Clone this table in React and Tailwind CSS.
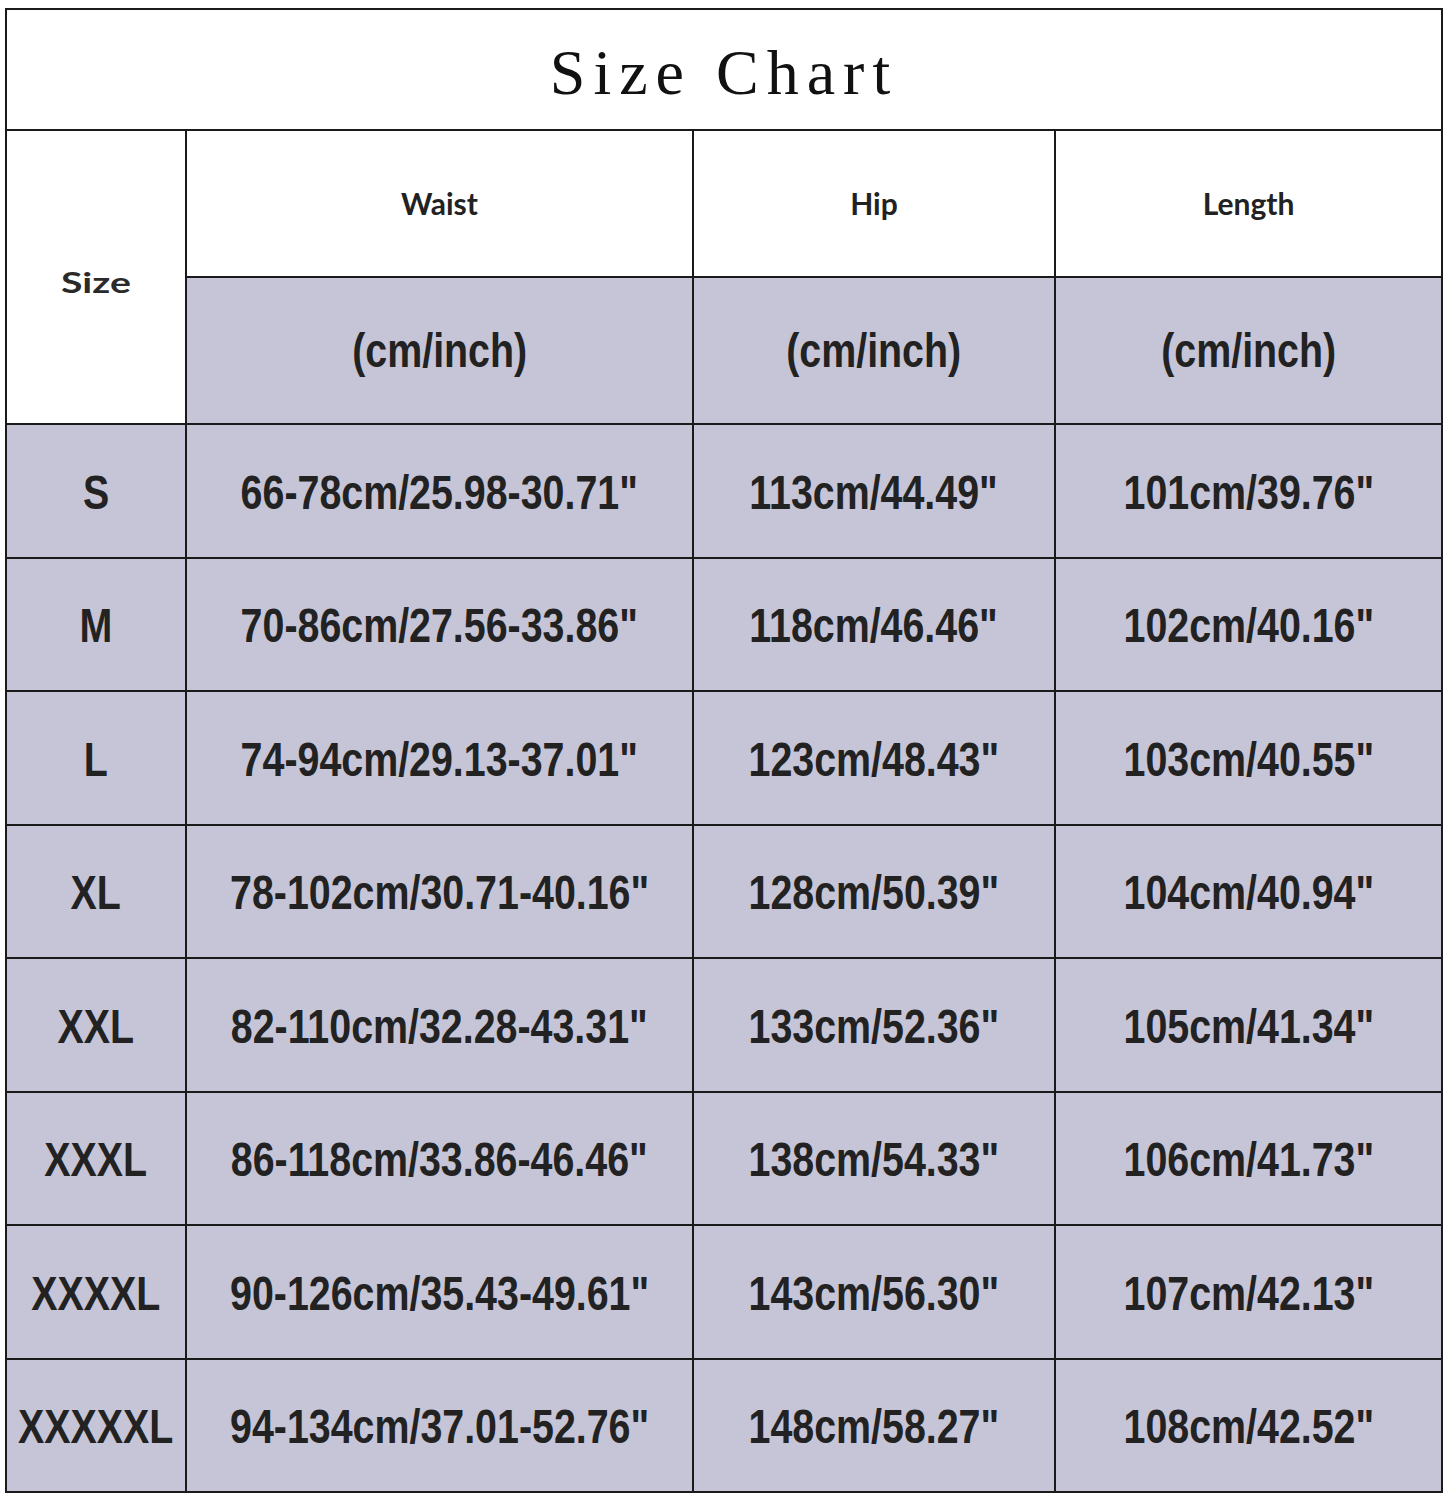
const rows = [
  ['S', '66-78cm/25.98-30.71"', '113cm/44.49"', '101cm/39.76"'],
  ['M', '70-86cm/27.56-33.86"', '118cm/46.46"', '102cm/40.16"'],
  ['L', '74-94cm/29.13-37.01"', '123cm/48.43"', '103cm/40.55"'],
  ['XL', '78-102cm/30.71-40.16"', '128cm/50.39"', '104cm/40.94"'],
  ['XXL', '82-110cm/32.28-43.31"', '133cm/52.36"', '105cm/41.34"'],
  ['XXXL', '86-118cm/33.86-46.46"', '138cm/54.33"', '106cm/41.73"'],
  ['XXXXL', '90-126cm/35.43-49.61"', '143cm/56.30"', '107cm/42.13"'],
  ['XXXXXL', '94-134cm/37.01-52.76"', '148cm/58.27"', '108cm/42.52"'],
]

const headCell = 'bg-white flex items-center justify-center text-[30px] font-bold text-[#222] font-["Lato",sans-serif]'
const narrowCell = 'bg-[#c6c5d7] flex items-center justify-center text-[#222] font-["Liberation_Sans",Arial,sans-serif]'

function Narrow({ children }) {
  return (
    <span className="inline-block whitespace-nowrap text-[48px] leading-none font-bold scale-x-[0.82]">
      {children}
    </span>
  )
}

export default function App() {
  return (
    <div className="min-h-[1500px] bg-white pt-[8px] pl-[5px]">
      <div className="w-[1438px] bg-[#1a1a1a] p-[2px] grid grid-cols-[178px_505px_360px_385px] grid-rows-[119px_145px_145px_repeat(8,131.5px)] gap-[2px]">
        {/* Title */}
        <div className="col-span-4 bg-white flex items-center justify-center pt-[6px]">
          <span className="text-[64px] leading-none tracking-[8px] text-[#111] font-['Liberation_Serif','Times_New_Roman',serif]">
            Size Chart
          </span>
        </div>

        {/* Header */}
        <div className={`${headCell} row-span-2 pt-[10px]`}>
          <span className="inline-block text-[29px] text-[#2a2a2a] scale-x-[1.35]">Size</span>
        </div>
        <div className={headCell}>Waist</div>
        <div className={headCell}>Hip</div>
        <div className={headCell}>Length</div>
        <div className={narrowCell}><Narrow>(cm/inch)</Narrow></div>
        <div className={narrowCell}><Narrow>(cm/inch)</Narrow></div>
        <div className={narrowCell}><Narrow>(cm/inch)</Narrow></div>

        {/* Data */}
        {rows.map((r) => (
          <div key={r[0]} className="contents">
            {r.map((v, i) => (
              <div key={i} className={`${narrowCell} pt-[4px]`}><Narrow>{v}</Narrow></div>
            ))}
          </div>
        ))}
      </div>
    </div>
  )
}
